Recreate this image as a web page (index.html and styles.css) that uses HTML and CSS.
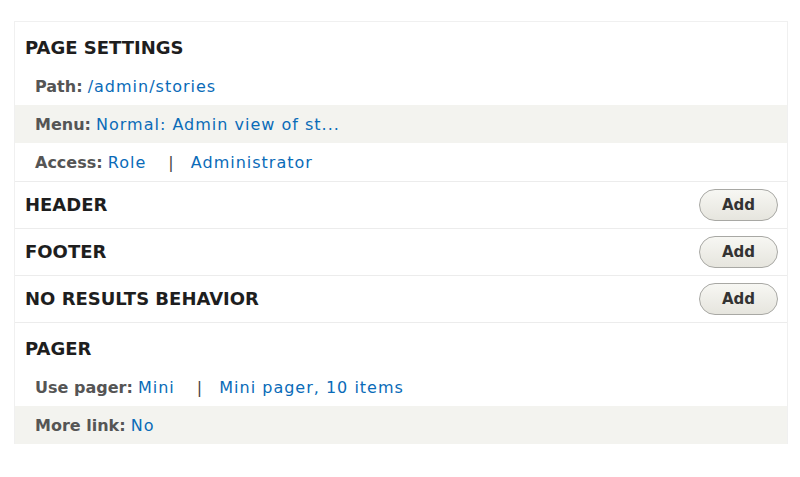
FILE: index.html
```html
<!DOCTYPE html>
<html lang="en">
<head>
    <meta charset="UTF-8">
    <title>View settings</title>
    <link rel="stylesheet" href="styles.css">
</head>
<body>
    <div class="views-box">
        <div class="section">
            <h3>Page settings</h3>
            <div class="row">
                <span class="label">Path:</span> <a href="#">/admin/stories</a>
            </div>
            <div class="row odd">
                <span class="label">Menu:</span> <a href="#">Normal: Admin view of st...</a>
            </div>
            <div class="row">
                <span class="label">Access:</span> <a href="#">Role</a>
                <span class="sep">|</span> <a href="#">Administrator</a>
            </div>
        </div>
        <div class="section bar">
            <h3>Header</h3>
            <button type="button">Add</button>
        </div>
        <div class="section bar">
            <h3>Footer</h3>
            <button type="button">Add</button>
        </div>
        <div class="section bar">
            <h3>No results behavior</h3>
            <button type="button">Add</button>
        </div>
        <div class="section last">
            <h3>Pager</h3>
            <div class="row">
                <span class="label">Use pager:</span> <a href="#">Mini</a>
                <span class="sep">|</span> <a href="#">Mini pager, 10 items</a>
            </div>
            <div class="row odd">
                <span class="label">More link:</span> <a href="#">No</a>
            </div>
        </div>
    </div>
</body>
</html>
```

FILE: styles.css
```css
body {
    font-family: 'DejaVu Sans', 'Lucida Grande', sans-serif;
    background: white;
    margin: 0;
    padding: 21px 12px 0 14px;
    color: #222;
}
.views-box {
    border: 1px solid #f0f0f0;
    border-bottom: none;
}
.section {
    border-bottom: 1px solid #ececec;
}
.section.last {
    border-bottom: none;
}
h3 {
    margin: 0;
    padding: 14px 10px 7px;
    font-size: 18px;
    font-weight: bold;
    text-transform: uppercase;
    line-height: 24px;
    color: #1e1e1e;
}
.bar {
    display: flex;
    align-items: center;
    justify-content: space-between;
    height: 46px;
}
.bar h3 {
    padding: 0 10px;
}
.row {
    padding: 0 20px;
    height: 38px;
    line-height: 39px;
    font-size: 16px;
    color: #555;
}
.row.odd {
    background: #f3f3ef;
}
.label {
    font-weight: bold;
    color: #555;
}
.row a {
    color: #0a6bb8;
    text-decoration: none;
    letter-spacing: 1px;
}
.sep {
    margin: 0 12px 0 17px;
    color: #444;
}
button {
    margin-right: 9px;
    width: 79px;
    height: 32px;
    border: 1px solid #a8a8a4;
    border-radius: 16px;
    background: linear-gradient(#f7f7f3, #e6e5de);
    font-family: inherit;
    font-size: 15px;
    font-weight: bold;
    color: #333;
    cursor: pointer;
}
```
